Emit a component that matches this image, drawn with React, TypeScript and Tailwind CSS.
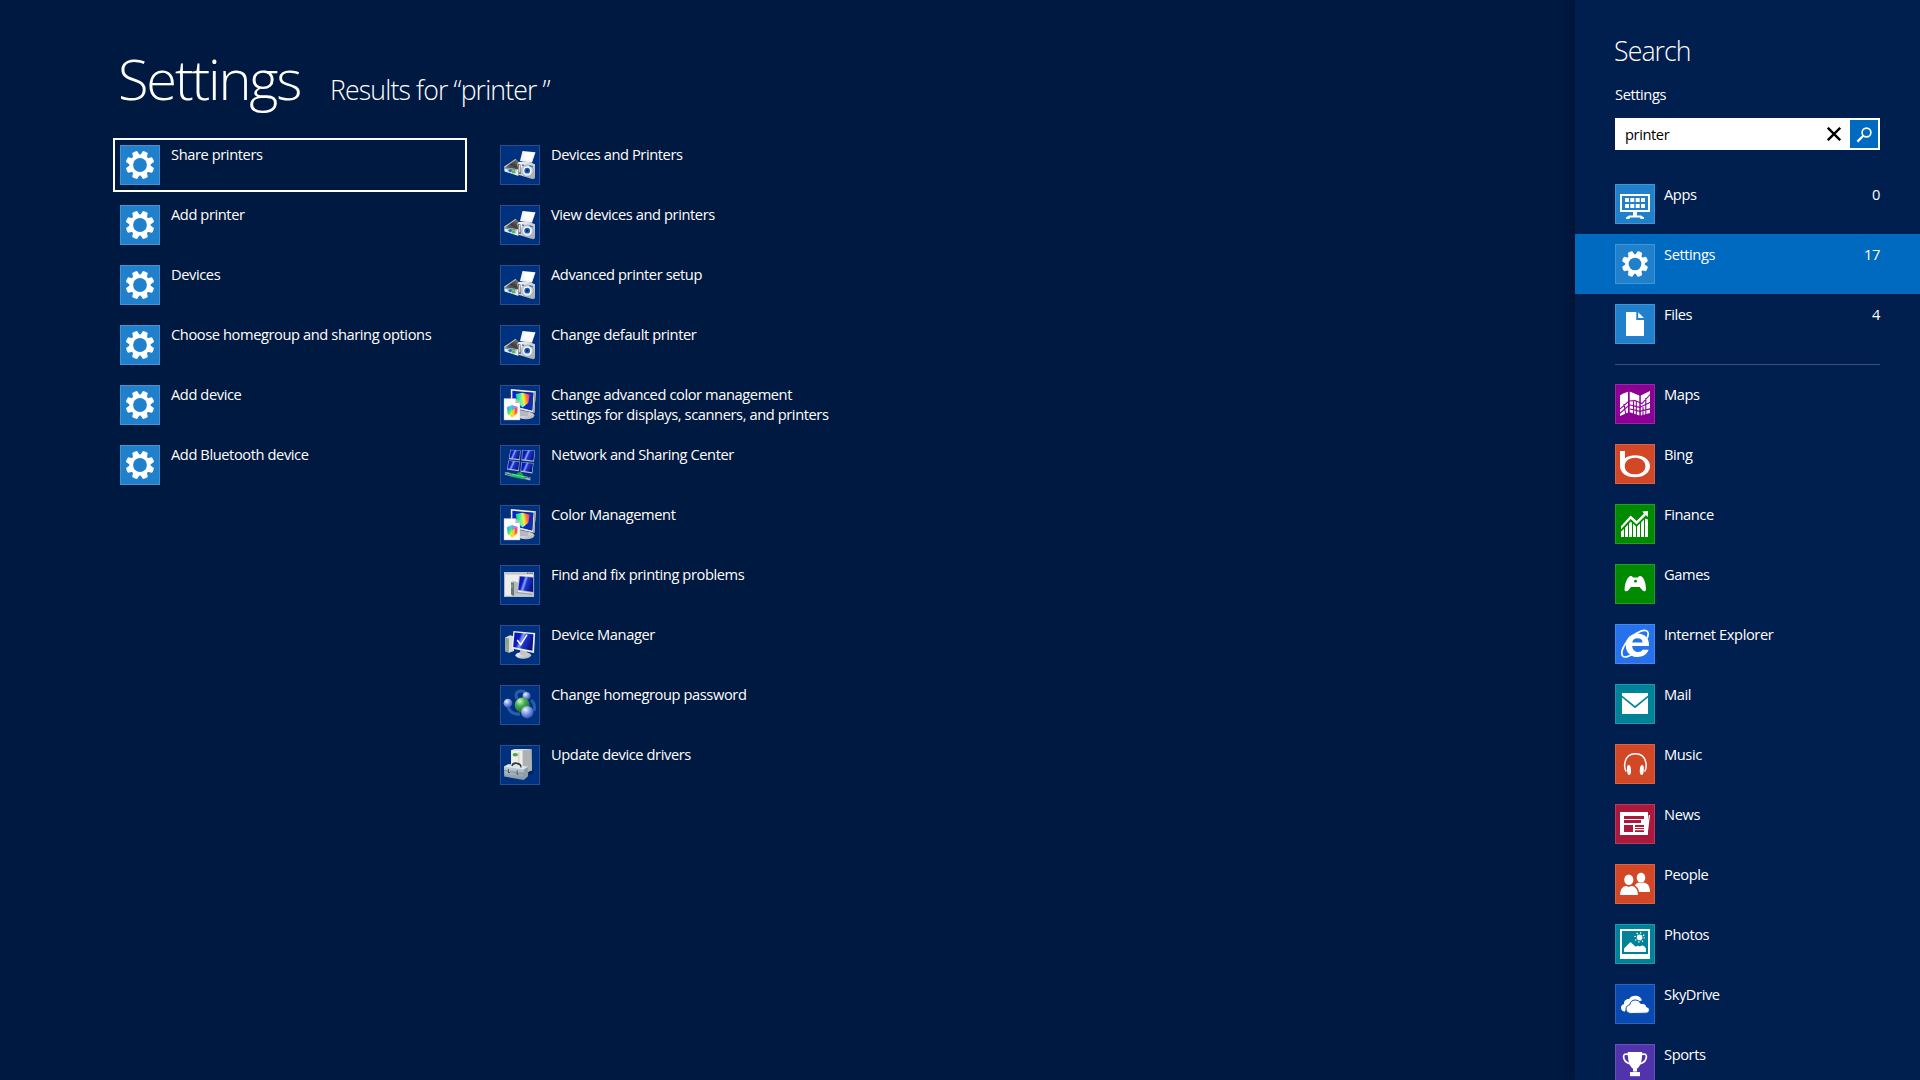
import type { ReactNode } from "react";

function Gear({ hole, scale = 1 }: { hole: string; scale?: number }) {
  const teeth = [22.5, 67.5, 112.5, 157.5, 202.5, 247.5, 292.5, 337.5];
  return (
    <svg viewBox="-20 -20 40 40" className="block size-full">
      <g transform={`scale(${scale})`} fill="#fff">
        {teeth.map((a) => (
          <path key={a} d="M-3.6-9 L-2.6-14 Q0-14.7 2.6-14 L3.6-9Z" transform={`rotate(${a})`} />
        ))}
        <circle r="10.6" />
        <circle r="6.9" fill={hole} />
      </g>
    </svg>
  );
}

function Art({ children }: { children: ReactNode }) {
  return (
    <svg viewBox="0 0 40 40" className="block size-full">
      {children}
    </svg>
  );
}

function Defs() {
  return (
    <svg className="absolute size-0">
      <defs>
        <linearGradient id="screen" x1="0" y1="0" x2="1" y2="0.35">
          <stop offset="0" stopColor="#0414a0" />
          <stop offset="0.35" stopColor="#0a1cc8" />
          <stop offset="0.5" stopColor="#8ea6f4" />
          <stop offset="0.62" stopColor="#2038d0" />
          <stop offset="1" stopColor="#081488" />
        </linearGradient>
        <linearGradient id="silver" x1="0" y1="0" x2="1" y2="1">
          <stop offset="0" stopColor="#fbfbfb" />
          <stop offset="1" stopColor="#a4a8ac" />
        </linearGradient>
        <linearGradient id="lid" x1="0" y1="1" x2="1" y2="0">
          <stop offset="0" stopColor="#8c8c88" />
          <stop offset="0.5" stopColor="#3c3c3a" />
          <stop offset="1" stopColor="#8a8a86" />
        </linearGradient>
        <linearGradient id="rainbow" x1="0" y1="0.2" x2="1" y2="0">
          <stop offset="0" stopColor="#20e070" />
          <stop offset="0.3" stopColor="#40f0c0" />
          <stop offset="0.5" stopColor="#f4f040" />
          <stop offset="0.75" stopColor="#ff7030" />
          <stop offset="1" stopColor="#f020c0" />
        </linearGradient>
        <linearGradient id="rainbowLeft" x1="0" y1="0" x2="0.7" y2="1">
          <stop offset="0" stopColor="#f030d0" />
          <stop offset="0.3" stopColor="#30b0f8" />
          <stop offset="0.55" stopColor="#30f060" />
          <stop offset="0.85" stopColor="#f8f030" />
          <stop offset="1" stopColor="#ffb020" />
        </linearGradient>
        <linearGradient id="rainbowRight" x1="0" y1="0" x2="0" y2="1">
          <stop offset="0" stopColor="#ff30d0" />
          <stop offset="0.5" stopColor="#ff5040" />
          <stop offset="1" stopColor="#ffd020" />
        </linearGradient>
        <radialGradient id="ballGreen" cx="0.35" cy="0.25" r="0.8">
          <stop offset="0" stopColor="#d8f8c8" />
          <stop offset="0.4" stopColor="#48b050" />
          <stop offset="1" stopColor="#106820" />
        </radialGradient>
        <radialGradient id="ballBlue" cx="0.35" cy="0.3" r="0.8">
          <stop offset="0" stopColor="#f0f4ff" />
          <stop offset="0.45" stopColor="#7f9ce8" />
          <stop offset="1" stopColor="#2440a8" />
        </radialGradient>
        <linearGradient id="toolbox" x1="0" y1="0" x2="0" y2="1">
          <stop offset="0" stopColor="#d0dce4" />
          <stop offset="1" stopColor="#7f929e" />
        </linearGradient>
      </defs>
    </svg>
  );
}

const DevicesPrinters = () => (
  <Art>
    <path d="M22.5 6 L35.5 7.2 32 17.8 20 16Z" fill="#f4f4f6" />
    <path d="M25 7 L34 8 31 16 24 14Z" fill="#fff" />
    <path d="M4 21.5 L15.5 13.8 19.5 17.5 18 24.5Z" fill="url(#lid)" />
    <path d="M3.8 22 L15.5 14 16 14.6 5 22.4Z" fill="#d8dcdc" />
    <path d="M4 22.2 L18 24.3 18.5 31 4.6 26.4Z" fill="#e6eaec" />
    <path d="M7.5 25 L11 24 13 26 10 27.4Z" fill="#187ccc" />
    <path d="M11 26 L15 25 15.8 28 12.5 28.6Z" fill="#55b860" />
    <path d="M4 23 L17 25" stroke="#54605f" strokeWidth="0.7" />
    <path d="M17.5 18.5 Q18 16.5 20 17 L25 16.6 28.5 16.8 35 19.3 35 33.2 33 34.3 18.5 29.8Z" fill="url(#silver)" />
    <path d="M17.8 18.6 L20.4 19.2 21 29 18.8 29Z" fill="#6a7076" />
    <path d="M19 19.5 L20 20 20.3 27.5 19.2 27Z" fill="#e0e3e6" />
    <circle cx="27.4" cy="25.8" r="5.8" fill="#d4dadf" stroke="#8b949a" strokeWidth="0.6" />
    <circle cx="27.4" cy="25.8" r="4" fill="#fff" />
    <circle cx="27.2" cy="25.7" r="2.9" fill="#1c5ab8" />
    <circle cx="27.2" cy="25.6" r="1.2" fill="#0a1e50" />
    <path d="M22 20 L24 20.4M29.5 20.6 L33 22" stroke="#2c74c8" strokeWidth="1.3" />
  </Art>
);

const ColorMgmt = () => (
  <Art>
    <ellipse cx="26" cy="30.5" rx="8.4" ry="3.8" fill="url(#silver)" />
    <path d="M20 25 L29 27 28 31 20 31Z" fill="#b6babe" />
    <path d="M10.8 4 L35.8 6.2 34.4 27.8 11 22.5Z" fill="#f2f0e2" />
    <path d="M35.8 6.2 L34.4 27.8 33 27 34.2 7Z" fill="#a8a8a0" />
    <path d="M12.4 5.8 L33.4 7.8 32.2 25.5 12.4 21Z" fill="#0826c8" />
    <path d="M24 7 L33.4 7.8 32.2 25.5 28 24.4 31 12Z" fill="#1030a0" />
    <path d="M16 9 L22.5 7.7 29.6 9.8 28.4 17.8 22.5 22.6 16.8 17.5Z" fill="url(#rainbow)" />
    <path d="M22.5 8 L24 22 18 18Z" fill="#f8f850" opacity="0.3" />
    <path d="M4 13.5 L15.5 13.5 20 18 20 35 4 35Z" fill="#fcfcfc" stroke="#b0b4b8" strokeWidth="0.4" />
    <path d="M15.5 13.5 L15.5 18 20 18Z" fill="#b8b8bc" />
    <path d="M7 22.2 L12 20.2 12.4 32.6 7.6 29Z" fill="url(#rainbowLeft)" />
    <path d="M12 20.2 L17.6 22 17.2 28.6 12.4 32.6Z" fill="url(#rainbowRight)" />
    <path d="M7 22.2 L12 20.2 17.6 22 12.4 25Z" fill="#40c8ff" opacity="0.7" />
    <path d="M12.2 25 L15 24 14 31 12.4 32.6Z" fill="#fff020" opacity="0.8" />
  </Art>
);

const Network = () => {
  const panes: [string, string][] = [
    ["M10.3 4.8 L20.7 5.2 19.8 15.2 8.8 14.2Z", "M10.8 5.2 L20.2 5.5 19.2 14 9.5 13Z"],
    ["M22.2 5 L35 5.4 34 16.8 21.4 15.6Z", "M22.7 5.4 L34.5 5.8 33.4 15.4 22.1 14.3Z"],
    ["M8.4 15.6 L19.7 16.3 18.8 26.3 7 24.6Z", "M8.9 16 L19.2 16.7 18.2 25 7.7 23.4Z"],
    ["M21.4 17 L33.6 18 32.4 28.6 20.4 26.8Z", "M21.9 17.4 L33 18.4 31.8 27.2 21.1 25.5Z"],
  ];
  return (
    <Art>
      {panes.map(([frame, glass]) => (
        <g key={frame}>
          <path d={frame} fill="#b4bccc" />
          <path d={glass} fill="url(#screen)" />
        </g>
      ))}
      <path d="M5 28.4 L12 29.8M24 32.4 L30.5 34" stroke="#9db8c6" strokeWidth="3" />
      <path d="M4 27.2 L8 29.6 12 28.6M23 33.8 L27 31.8 31 33.8" stroke="#28466e" strokeWidth="0.8" fill="none" />
      <path d="M10.5 29.8 L25 32.8" stroke="#27b45c" strokeWidth="3.4" />
      <path d="M17 28 L21 26.8 24 31 17 31Z" fill="#17a84a" />
      <path d="M12 29.2 L24 31.8" stroke="#6fe898" strokeWidth="0.9" />
    </Art>
  );
};

const Troubleshoot = () => (
  <Art>
    <path d="M4 7 H34 V31.8 H4Z" fill="#eceef0" />
    <path d="M4 7 H34 V9.6 H4Z" fill="#c4c8cc" />
    <path d="M27 8.2 h1.4M29.4 8.2 h1.4M31.6 8.2 h1.4" stroke="#4b5056" strokeWidth="1" />
    <path d="M4.5 9.6 V31.3 H33.6 V9.6" fill="none" stroke="#b6babe" strokeWidth="1" />
    <path d="M11 17 L14 16 18 17.5 18 30 12 31Z" fill="#b4bac0" />
    <path d="M11 17.3 L14 18 14 31 11 29.6Z" fill="#6e757a" />
    <path d="M12 19.5 V23" stroke="#54d838" strokeWidth="1.3" />
    <path d="M17 27 L33 28 33 31.3 15 31.3Z" fill="#c4c8cc" />
    <path d="M19 10.8 L33.6 12 33.6 28 17.5 25.5Z" fill="#a9b2c0" />
    <path d="M20 11.4 L33.2 12.6 33.2 27 18.4 24.8Z" fill="url(#screen)" />
    <path d="M16.5 27.5 L32 29.5" stroke="#8a9096" strokeWidth="0.8" />
  </Art>
);

const DeviceManager = () => (
  <Art>
    <path d="M5.2 12.5 L10 10.3 14 11.2 14 26 9 27.8 5.4 26.2Z" fill="#d9dcda" />
    <path d="M5.2 12.5 L9 13.4 9 27.8 5.4 26.2Z" fill="#98a0a0" />
    <path d="M6.8 14.5 V19" stroke="#58c040" strokeWidth="1.2" />
    <ellipse cx="23.3" cy="30.3" rx="7.8" ry="3.4" fill="url(#silver)" />
    <path d="M20 25 L27 26.3 26 31 20.5 30Z" fill="#c0c4c6" />
    <path d="M13.4 6 L35.2 8 34 28 11.6 23.6Z" fill="#efeee4" />
    <path d="M14.6 7.6 L33.4 9.3 32.4 25.8 13.2 22.1Z" fill="url(#screen)" />
    <path d="M17.2 15 L20.8 19.6 27 9.6" fill="none" stroke="#fff" strokeWidth="1.5" />
  </Art>
);

const Homegroup = () => (
  <Art>
    <path d="M17 14 Q14 6.5 21 6 Q25 6 27 9" fill="none" stroke="#3367b0" strokeWidth="3" opacity="0.8" />
    <path d="M8 22 Q11 30 20 29" fill="none" stroke="#2f66b4" strokeWidth="3.2" opacity="0.85" />
    <path d="M31 15 Q36 19 34 26" fill="none" stroke="#2f62b0" strokeWidth="3" opacity="0.85" />
    <circle cx="26.5" cy="11" r="4" fill="url(#ballBlue)" />
    <circle cx="8" cy="18.2" r="4.4" fill="url(#ballBlue)" />
    <circle cx="22.2" cy="20" r="7.5" fill="url(#ballGreen)" />
    <circle cx="27.3" cy="27.2" r="6.2" fill="url(#ballBlue)" />
  </Art>
);

const DriverUpdate = () => (
  <Art>
    <path d="M26 27 L34 24 33 29 27 30Z" fill="#001c50" opacity="0.6" />
    <path d="M11 5.2 L14.5 4 31.4 4 31.8 25.5 24 28 11 26Z" fill="#d8dad8" />
    <path d="M22.5 5.6 L31.4 4 31.8 25.5 23 28Z" fill="#aeb2b2" />
    <path d="M11.3 5.6 L22.3 5.8 22.3 26 11.3 25Z" fill="#eeeeea" />
    <ellipse cx="15.3" cy="9.8" rx="2.7" ry="1.7" fill="#48a838" />
    <path d="M18.8 7 V21" stroke="#b8bab8" strokeWidth="0.7" />
    <path d="M12 21 Q12.5 18 16.5 18.3 Q21 18.8 21 22.5" fill="none" stroke="#30383e" strokeWidth="1.5" />
    <path d="M4 21.5 L8.5 19.3 28.2 21.8 28 31 23.5 35 4.2 31.6Z" fill="url(#toolbox)" />
    <path d="M4 21.5 L8.5 19.3 28.2 21.8 23.8 24.6Z" fill="#dce6ec" />
    <path d="M23.8 24.6 L28.2 21.8 28 31 23.5 35Z" fill="#8e9ea8" />
    <path d="M12 21.2 Q12.5 18 16.5 18.3 Q21 18.8 21 22.5" fill="none" stroke="#30383e" strokeWidth="1.3" />
    <path d="M4.2 25.4 L23.6 28.8" stroke="#71828e" strokeWidth="0.7" />
    <path d="M9 24 V28M17.5 25.6 V29.6" stroke="#2e3a42" strokeWidth="1.5" />
    <path d="M9.5 24 V27M18 25.6 V28.6" stroke="#f4f8fa" strokeWidth="0.7" />
  </Art>
);

const AppsIcon = () => (
  <Art>
    <path d="M5 10 H35 V28 H5Z M7 12 V26 H33 V12Z" fill="#fff" fillRule="evenodd" />
    {[10, 15.3, 20.7, 26].map((x) => (
      <g key={x} fill="#fff">
        <rect x={x} y="14" width="4" height="4" />
        <rect x={x} y="20" width="4" height="4" />
      </g>
    ))}
    <path d="M18 28 H22 V31.5 H26 L29 33.4 V35 H26 L24.5 33.6 H15.5 L14 35 H11 V33.4 L14 31.5 H18Z" fill="#fff" />
  </Art>
);

const FilesIcon = () => (
  <Art>
    <path d="M11 8 H21.3 V16 H29 V32 H11Z M23.2 8.2 L29 14 H23.2Z" fill="#fff" />
  </Art>
);

const MapsIcon = () => (
  <Art>
    <path d="M5 11.2 L9 9.2 13 7.7 V28.5 L5 32Z" fill="#fff" />
    <path d="M14.7 7.5 L24.3 11.4 V31.6 L14.7 28.2Z" fill="#fff" />
    <path d="M25.8 11.6 L35 7 V29 L25.8 31.6Z" fill="#fff" />
    <path d="M4 25.8 L14 17 L20 16.6 27 19.6 36 9.5M4 30 L14.5 20.8 24.5 23.4 36 18M15 25 L25 27.4 36 24.6M18.5 17 V32M21.3 17.5 V32M30.8 14 V31M9 20 L11 32M28 23 V32" fill="none" stroke="#8c0095" strokeWidth="1.1" />
  </Art>
);

const BingIcon = () => (
  <Art>
    <path d="M5 7 H10 V14.2 C13 12 16.5 11.2 20 11.2 C29 11.2 35 15.8 35 22 C35 28.6 29 33.2 20 33.2 C11 33.2 5 28.8 5 22Z M20 13.8 C13.6 13.8 9.8 17.4 9.8 22.2 C9.8 27 13.6 30.3 20 30.3 C26.4 30.3 30.4 27 30.4 22.2 C30.4 17.4 26.4 13.8 20 13.8Z" fill="#fff" fillRule="evenodd" />
  </Art>
);

const FinanceIcon = () => (
  <Art>
    <path d="M6 22.3 L15.6 11.4 21.6 17 29 9.6 27.2 7.4 33 7 32.8 13 30.8 11.3 21.6 20.6 15.7 15.1 6 25.2Z" fill="#fff" />
    <g fill="#fff">
      <path d="M6 27.6 L9 25 V33 H6Z" />
      <path d="M10 23.8 L13 20.8 V33 H10Z" />
      <path d="M14 19.6 L15.8 17.6 17 18.7 V33 H14Z" />
      <path d="M18 19.6 L21 22.4 V33 H18Z" />
      <path d="M22 22.4 L25 19.4 V33 H22Z" />
      <path d="M26 18.4 L29 15.4 V33 H26Z" />
      <path d="M30 14.6 L33 15.4 V33 H30Z" />
    </g>
  </Art>
);

const GamesIcon = () => (
  <Art>
    <path d="M14.5 12.4 C16 11.6 17.2 12.3 18 13.5 H23 C23.8 12.3 25 11.6 26.6 12.4 C29 13.8 31 19.5 31 25 C31 28 28.8 27.8 27.4 26.2 L24.6 23 H16 L13.4 26.2 C12 27.8 9.2 28 9.6 25 C9.8 19.5 12 13.8 14.5 12.4Z" fill="#fff" />
    <circle cx="20.5" cy="17.2" r="1.4" fill="#008a00" />
  </Art>
);

const IeIcon = () => (
  <Art>
    <path d="M34 22 H17.2 C17.4 26.2 20.4 28 23 28 C25.2 28 26.8 27.2 27.6 25.8 H33.6 C31.8 30.6 27.6 33 22.6 33 C15.6 33 10.8 28.2 10.8 21.4 C10.8 14.6 15.8 9.6 22.6 9.6 C30 9.6 34.6 14.8 34 22Z M17.2 18.4 H27.6 C27.4 15.6 25.4 14.2 22.6 14.2 C19.6 14.2 17.6 15.8 17.2 18.4Z" fill="#fff" fillRule="evenodd" />
    <path d="M32 14.5 C35.8 5.8 30.2 4 21 9.6 C11.6 15.6 5.2 26.2 7.2 31.2 C8.6 34.6 13.4 32.6 17.4 30.2" fill="none" stroke="#fff" strokeWidth="1.7" />
  </Art>
);

const MailIcon = () => (
  <Art>
    <path d="M7 9 H33 V11.5 L20 22 7 11.5Z" fill="#fff" />
    <path d="M7 13.6 L20 24.2 33 13.6 V30 H7Z" fill="#fff" />
  </Art>
);

const MusicIcon = () => (
  <Art>
    <path d="M11.2 27.5 C9.4 24.5 9.4 20.5 10.2 17.6 C11.6 12.4 15.2 9.8 20.4 9.8 C25.6 9.8 29.2 12.4 30.6 17.6 C31.4 20.5 31.4 24.5 29.6 27.5" fill="none" stroke="#fff" strokeWidth="1.5" />
    <ellipse cx="14" cy="26" rx="2" ry="5" fill="#fff" transform="rotate(-4 14 26)" />
    <ellipse cx="26.8" cy="26" rx="2" ry="5" fill="#fff" transform="rotate(4 26.8 26)" />
  </Art>
);

const NewsIcon = () => (
  <Art>
    <path d="M5 8 H33 V31 H5Z" fill="#fff" />
    <path d="M33.8 11 L35 11 32.6 31 H31 Z" fill="#fff" />
    <g fill="#ac193d">
      <rect x="9" y="12" width="20" height="3" />
      <rect x="9" y="16" width="17" height="3" />
      <rect x="9" y="21" width="9" height="7" />
      <rect x="20" y="21" width="9" height="2" />
      <rect x="20" y="24" width="9" height="1" />
      <rect x="20" y="26.2" width="9" height="1.8" />
    </g>
  </Art>
);

const PeopleIcon = () => (
  <Art>
    <g fill="#fff">
      <ellipse cx="26" cy="13.7" rx="4.3" ry="5" />
      <path d="M19.8 21.6 C21 19.2 23 18.5 24 18.4 Q26 20 28 18.4 C32.5 19 35 21.5 35 28 H20Z" />
    </g>
    <g fill="#fff" stroke="#d24726" strokeWidth="1.4">
      <path d="M4.3 31.7 C4.3 24.8 6.8 21.8 11 21 Q13.8 23 16.6 21 C21.2 21.8 23.7 24.8 23.7 31.7Z" />
      <ellipse cx="13.8" cy="15.7" rx="5.3" ry="6" />
    </g>
    <path d="M3 31 H25 V33 H3Z" fill="#d24726" />
  </Art>
);

const PhotosIcon = () => (
  <Art>
    <path d="M5 5 H35 V35 H5Z M7 7 V30 H33 V7Z" fill="#fff" fillRule="evenodd" />
    <path d="M9 28 V24.4 L15.5 18 20.6 22.8 C22 21.6 23.6 21.4 24.8 22.4 L26.8 21.4 C28.8 21.2 30.2 23 31 24.4 V28Z" fill="#fff" />
    <circle cx="24.6" cy="13.4" r="2.8" fill="#fff" />
    <circle cx="24.6" cy="13.4" r="4.6" fill="none" stroke="#fff" strokeWidth="1.5" strokeDasharray="1.1 2.51" />
  </Art>
);

const SkyDriveIcon = () => (
  <Art>
    <path d="M10 27.6 C7.6 27.6 6 26 6 23.8 C6 21.6 7.2 20.4 9 20.2 C8.6 17 11 14.6 14.2 15 C15.4 12.8 18 11.6 20.6 11.8 C24 11.8 26 13.8 27 16.4 L20 18 12 23Z" fill="#fff" />
    <path d="M16.4 29.5 C13 29.5 11 27.6 11 25 C11 22.6 12.8 21 14.8 20.8 C15 18 17.2 16 20 16 C22.8 16 24.8 17.4 25.8 19.6 C29 18.8 31.4 20.4 31.6 23 C33.4 23 34.6 24.4 34.4 26 C34.2 28 33 29.2 31 29.2Z" fill="#fff" stroke="#094ab2" strokeWidth="1" />
  </Art>
);

const SportsIcon = () => (
  <Art>
    <path d="M12.8 8 H27.2 C27.2 16 26 22 22 24.8 V28 H24.2 V32 H15.8 V28 H18 V24.8 C14 22 12.8 16 12.8 8Z" fill="#fff" />
    <path d="M13 10.4 C10.6 9.6 8.6 10.2 8.6 12.6 C8.6 16.4 11.6 19 15.4 20M27 10.4 C29.4 9.6 31.4 10.2 31.4 12.6 C31.4 16.4 28.4 19 24.6 20" fill="none" stroke="#fff" strokeWidth="1.7" />
    <path d="M15 28 H25 V32.2 H15Z" fill="#fff" />
    <path d="M15 27.6 H25" stroke="#5133ab" strokeWidth="0.5" />
  </Art>
);

function Tile({ color, children }: { color: string; children: ReactNode }) {
  return (
    <span className={`relative block size-10 shrink-0 ${color}`}>
      {children}
      <span className="absolute inset-0 border border-white/15" />
    </span>
  );
}

const BLUE = "bg-[#2080cb]";

const settingsResults = [
  "Share printers",
  "Add printer",
  "Devices",
  "Choose homegroup and sharing options",
  "Add device",
  "Add Bluetooth device",
];

const controlPanelResults: [string, ReactNode][] = [
  ["Devices and Printers", <DevicesPrinters />],
  ["View devices and printers", <DevicesPrinters />],
  ["Advanced printer setup", <DevicesPrinters />],
  ["Change default printer", <DevicesPrinters />],
  ["Change advanced color management settings for displays, scanners, and printers", <ColorMgmt />],
  ["Network and Sharing Center", <Network />],
  ["Color Management", <ColorMgmt />],
  ["Find and fix printing problems", <Troubleshoot />],
  ["Device Manager", <DeviceManager />],
  ["Change homegroup password", <Homegroup />],
  ["Update device drivers", <DriverUpdate />],
];

const scopes: { name: string; count: number; icon: ReactNode; active?: boolean }[] = [
  { name: "Apps", count: 0, icon: <AppsIcon /> },
  { name: "Settings", count: 17, icon: <Gear hole="#2080cb" scale={0.92} />, active: true },
  { name: "Files", count: 4, icon: <FilesIcon /> },
];

const apps: [string, string, ReactNode][] = [
  ["Maps", "bg-[#8c0095]", <MapsIcon />],
  ["Bing", "bg-[#d24726]", <BingIcon />],
  ["Finance", "bg-[#008a00]", <FinanceIcon />],
  ["Games", "bg-[#008a00]", <GamesIcon />],
  ["Internet Explorer", "bg-[#2672ec]", <IeIcon />],
  ["Mail", "bg-[#008299]", <MailIcon />],
  ["Music", "bg-[#d24726]", <MusicIcon />],
  ["News", "bg-[#ac193d]", <NewsIcon />],
  ["People", "bg-[#d24726]", <PeopleIcon />],
  ["Photos", "bg-[#008299]", <PhotosIcon />],
  ["SkyDrive", "bg-[#094ab2]", <SkyDriveIcon />],
  ["Sports", "bg-[#5133ab]", <SportsIcon />],
];

function Result({ label, tile, selected, width }: { label: string; tile: ReactNode; selected?: boolean; width: string }) {
  return (
    <li className={`flex h-[54px] items-start border-2 px-[5px] pt-[5px] ${width} ${selected ? "border-white" : "border-transparent"}`}>
      {tile}
      <span className="-mt-px w-[296px] pl-[11px]">{label}</span>
    </li>
  );
}

export default function App() {
  return (
    <div className="flex h-[1080px] w-[1920px] overflow-hidden bg-[#001940] font-['Open_Sans','Noto_Sans',sans-serif] text-[14.67px] leading-5 tracking-[-0.41px] text-white">
      <Defs />
      <main className="flex flex-1 flex-col pl-[113px]">
        <header className="flex h-[138px] items-baseline pl-[5px] pt-[40px]">
          <h1 className="text-[56px] font-light leading-[76px] tracking-[-2.2px]">Settings</h1>
          <p className="pl-[30px] text-[26.67px] font-light tracking-[-0.87px]">Results for “printer ”</p>
        </header>
        <div className="flex gap-[26px]">
          <ul className="flex flex-col gap-1.5">
            {settingsResults.map((label, i) => (
              <Result key={label} label={label} selected={i === 0} width="w-[354px]" tile={<Tile color={BLUE}><Gear hole="#2080cb" /></Tile>} />
            ))}
          </ul>
          <ul className="flex flex-col gap-1.5">
            {controlPanelResults.map(([label, icon]) => (
              <Result key={label} label={label} width="w-[356px]" tile={<Tile color="bg-[#00317f]">{icon}</Tile>} />
            ))}
          </ul>
        </div>
      </main>

      <aside className="flex w-[345px] flex-col bg-[#001e4e] shadow-[0_0_8px_rgba(0,0,0,0.35)]">
        <h2 className="pl-[39px] pt-[33px] text-[26.67px] font-light leading-9 tracking-[-0.9px]">Search</h2>
        <p className="pl-10 pt-[15px]">Settings</p>
        <div className="mx-10 mt-[14px] flex h-8 w-[265px] items-center bg-white p-0.5">
          <span className="flex-1 pl-2 text-black">printer</span>
          <svg viewBox="0 0 14 14" className="mr-[9px] size-3.5">
            <path d="M0.8 0.8 L13.2 13.2M13.2 0.8 L0.8 13.2" stroke="#000" strokeWidth="2.4" />
          </svg>
          <span className="flex size-7 bg-[#006ac1]">
            <svg viewBox="0 0 28 28" className="size-7" fill="none" stroke="#fff">
              <circle cx="16.5" cy="12.5" r="4.4" strokeWidth="1.6" />
              <path d="M13.3 15.8 L7.4 21.6" strokeWidth="2.2" />
            </svg>
          </span>
        </div>
        <ul className="mt-6 flex flex-col">
          {scopes.map((s) => (
            <li key={s.name} className={`flex h-[60px] items-start pl-10 pr-10 pt-2.5 ${s.active ? "bg-[#006ac1]" : ""}`}>
              <Tile color={BLUE}>{s.icon}</Tile>
              <span className="flex-1 pl-[9px]">{s.name}</span>
              <span>{s.count}</span>
            </li>
          ))}
        </ul>
        <div className="mx-10 mt-[10px] h-px shrink-0 bg-[#394f77]" />
        <ul className="mt-[9px] flex flex-col">
          {apps.map(([name, color, icon]) => (
            <li key={name} className="flex h-[60px] shrink-0 items-start pl-10 pt-2.5">
              <Tile color={color}>{icon}</Tile>
              <span className="pl-[9px]">{name}</span>
            </li>
          ))}
        </ul>
      </aside>
    </div>
  );
}
